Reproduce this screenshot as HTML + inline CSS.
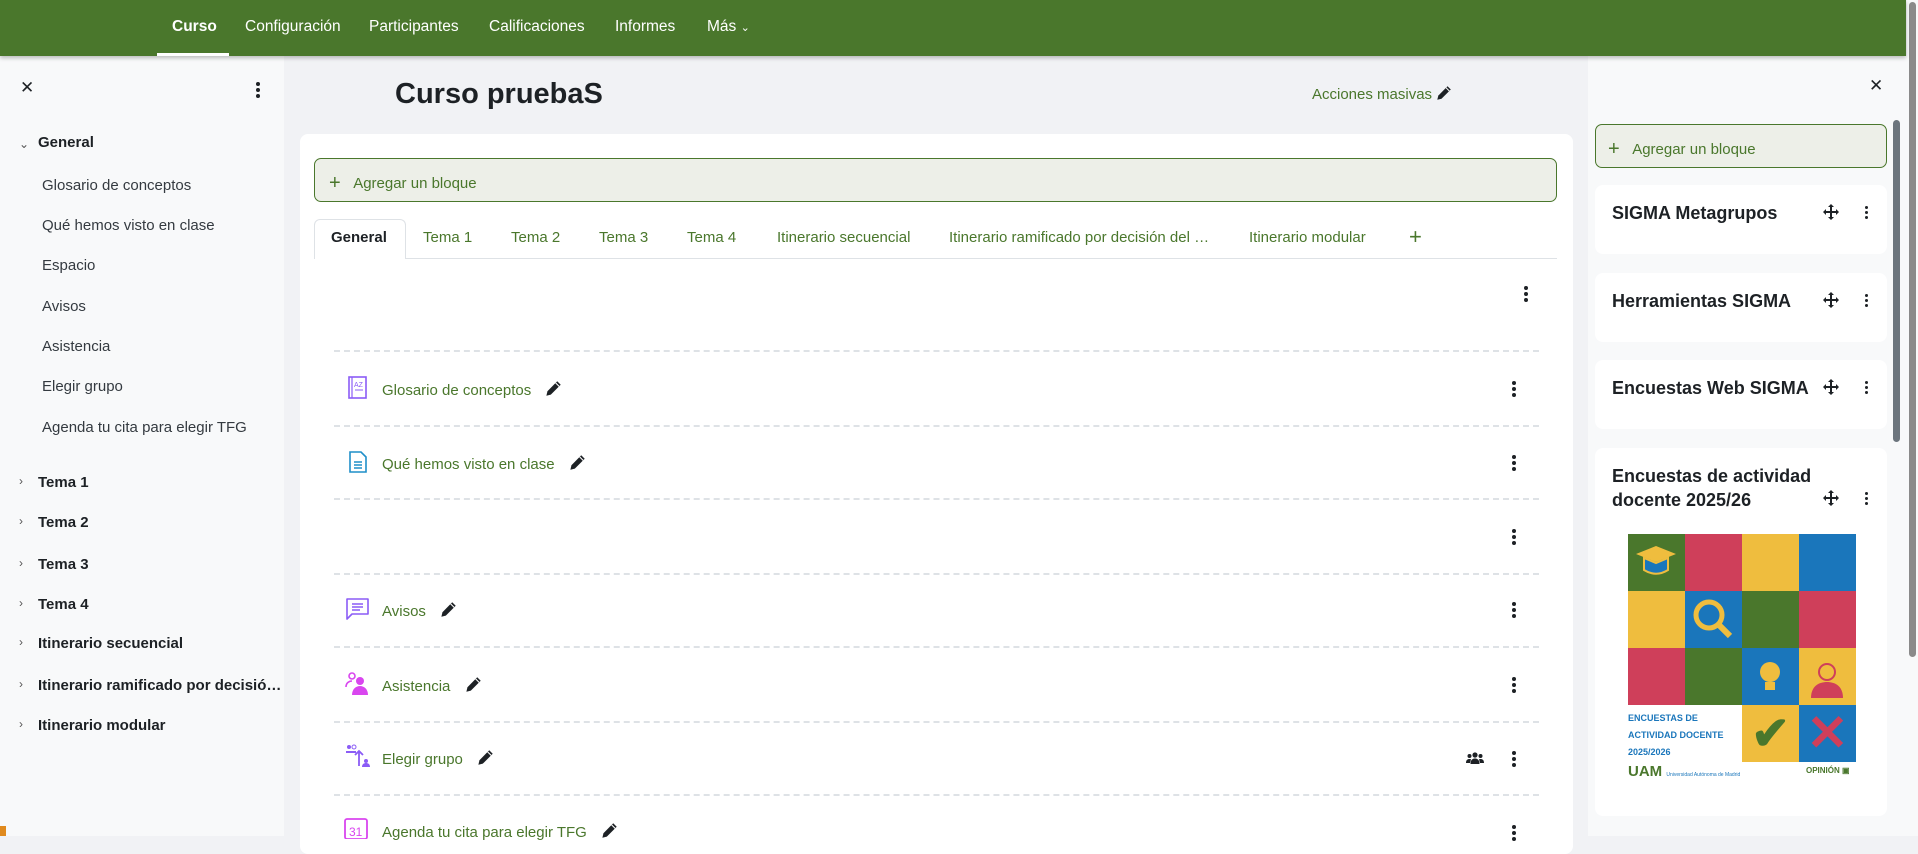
<!DOCTYPE html>
<html><head><meta charset="utf-8"><style>
*{box-sizing:border-box;margin:0;padding:0}
body{width:1918px;height:836px;overflow:hidden;background:#f1f2f5;font-family:"Liberation Sans",sans-serif;position:relative;color:#1d2125}
.abs{position:absolute}
.nav{left:0;top:0;width:1906px;height:56px;background:#4a772c;box-shadow:0 2px 4px rgba(0,0,0,.25);z-index:5}
.nav span{position:absolute;top:18px;color:#fff;font-size:15.5px}
.left{left:0;top:56px;width:284px;height:780px;background:#f8f9fa}
.left .it{position:absolute;left:42px;font-size:15px;color:#343a40}
.left .sec{position:absolute;left:38px;font-size:15px;font-weight:bold;color:#1d2125}
.left .car{position:absolute;left:19px;font-size:12px;color:#555}
.right{left:1588px;top:56px;width:319px;height:780px;background:#f8f9fa}
.card{left:300px;top:134px;width:1273px;height:720px;background:#fff;border-radius:8px}
.addb{background:#edefe8;border:1px solid #4a772c;border-radius:7px;color:#4a772c;font-size:15px}
.tab{position:absolute;top:229px;font-size:15px;color:#4a772c}
.dash{position:absolute;left:334px;width:1205px;border-top:2px dashed #dee2e6}
.act{position:absolute;left:382px;font-size:15px;color:#4a772c}
.act svg{vertical-align:-2px;margin-left:10px}
.dots{position:absolute;width:4px}
.dots i{display:block;width:4px;height:4px;border-radius:2px;background:#1d2125;margin-bottom:2px}
.blk{position:absolute;left:1595px;width:292px;background:#fff;border-radius:8px}
.blk b{position:absolute;left:17px;top:16px;font-size:18px;color:#1d2125;line-height:24px}
.blk .dots i{width:3px;height:3px;margin-bottom:2px}
.blk .mv{position:absolute;left:228px}
.g{position:absolute;width:57px;height:57px}
</style></head><body>
<svg width="0" height="0" style="position:absolute"><defs>
<symbol id="pen" viewBox="0 0 16 16"><path d="M11.5 1.2l3.3 3.3-9.3 9.3-4.2 1 1-4.2z" fill="#1d2125"/><path d="M10 2.7l3.3 3.3" stroke="#fff" stroke-width="1"/></symbol>
<symbol id="mv" viewBox="0 0 16 16"><path d="M8 0l3 3H9v4h4V5l3 3-3 3V9H9v4h2l-3 3-3-3h2V9H3v2L0 8l3-3v2h4V3H5z" fill="#1d2125"/></symbol>
</defs></svg>
<div class="abs nav">
<span style="left:172px;font-weight:bold">Curso</span>
<div class="abs" style="left:157px;top:53px;width:72px;height:3px;background:#fff"></div>
<span style="left:245px">Configuración</span>
<span style="left:369px">Participantes</span>
<span style="left:489px">Calificaciones</span>
<span style="left:615px">Informes</span>
<span style="left:707px">Más <small style="font-size:11px">&#8964;</small></span>
</div>

<div class="abs left">
<div class="abs" style="left:20px;top:22px;font-size:17px">✕</div>
<div class="dots" style="left:256px;top:26px"><i></i><i></i><i></i></div>
<div class="car" style="top:81px">&#8964;</div>
<div class="sec" style="top:78px">General</div>
<div class="it" style="top:121px">Glosario de conceptos</div>
<div class="it" style="top:161px">Qué hemos visto en clase</div>
<div class="it" style="top:201px">Espacio</div>
<div class="it" style="top:242px">Avisos</div>
<div class="it" style="top:282px">Asistencia</div>
<div class="it" style="top:322px">Elegir grupo</div>
<div class="it" style="top:363px">Agenda tu cita para elegir TFG</div>
<div class="car" style="top:418px">›</div><div class="sec" style="top:418px">Tema 1</div>
<div class="car" style="top:458px">›</div><div class="sec" style="top:458px">Tema 2</div>
<div class="car" style="top:500px">›</div><div class="sec" style="top:500px">Tema 3</div>
<div class="car" style="top:540px">›</div><div class="sec" style="top:540px">Tema 4</div>
<div class="car" style="top:579px">›</div><div class="sec" style="top:579px">Itinerario secuencial</div>
<div class="car" style="top:621px">›</div><div class="sec" style="top:621px">Itinerario ramificado por decisió…</div>
<div class="car" style="top:661px">›</div><div class="sec" style="top:661px">Itinerario modular</div>
</div>
<div class="abs" style="left:0;top:826px;width:6px;height:10px;background:#e08a1e"></div>

<div class="abs" style="left:395px;top:78px;font-size:29px;font-weight:bold">Curso pruebaS</div>
<div class="abs" style="left:1312px;top:85px;font-size:15px;color:#4a772c">Acciones masivas <svg width="16" height="16" style="vertical-align:-2px"><use href="#pen" style="fill:#4a772c"/></svg></div>

<div class="abs card"></div>
<div class="abs addb" style="left:314px;top:158px;width:1243px;height:44px;padding:12px 0 0 14px"><span style="font-size:20px;position:relative;top:1px">+</span>&nbsp;&nbsp;&nbsp;Agregar un bloque</div>
<div class="abs" style="left:314px;top:258px;width:1243px;border-top:1px solid #dee2e6"></div>
<div class="abs" style="left:314px;top:219px;width:92px;height:40px;background:#fff;border:1px solid #dee2e6;border-bottom:none;border-radius:6px 6px 0 0"></div>
<div class="tab" style="left:331px;color:#1d2125;font-weight:bold">General</div>
<div class="tab" style="left:423px">Tema 1</div>
<div class="tab" style="left:511px">Tema 2</div>
<div class="tab" style="left:599px">Tema 3</div>
<div class="tab" style="left:687px">Tema 4</div>
<div class="tab" style="left:777px">Itinerario secuencial</div>
<div class="tab" style="left:949px">Itinerario ramificado por decisión del …</div>
<div class="tab" style="left:1249px">Itinerario modular</div>
<div class="tab" style="left:1409px;font-size:22px;top:224px">+</div>

<div class="dots" style="left:1524px;top:286px"><i></i><i></i><i></i></div>
<div class="dash" style="top:350px"></div>
<div class="dash" style="top:425px"></div>
<div class="dash" style="top:498px"></div>
<div class="dash" style="top:573px"></div>
<div class="dash" style="top:646px"></div>
<div class="dash" style="top:721px"></div>
<div class="dash" style="top:794px"></div>

<svg class="abs" style="left:347px;top:376px" width="22" height="24" viewBox="0 0 22 24"><rect x="2" y="1" width="17" height="21" fill="none" stroke="#8b5cf6" stroke-width="1.6"/><line x1="5" y1="1" x2="5" y2="22" stroke="#8b5cf6" stroke-width="1.2"/><text x="7" y="11" font-size="7" fill="#8b5cf6" font-family="Liberation Sans">AZ</text><line x1="8" y1="14" x2="16" y2="14" stroke="#8b5cf6"/></svg>
<div class="act" style="top:380px">Glosario de conceptos <svg width="17" height="17"><use href="#pen"/></svg></div>
<div class="dots" style="left:1512px;top:381px"><i></i><i></i><i></i></div>

<svg class="abs" style="left:348px;top:450px" width="20" height="24" viewBox="0 0 20 24"><path d="M2 2h11l5 5v15H2z" fill="none" stroke="#1f8fc9" stroke-width="1.6"/><path d="M6 12h8M6 15h8M6 18h8" stroke="#1f8fc9" stroke-width="1.4"/></svg>
<div class="act" style="top:454px">Qué hemos visto en clase <svg width="17" height="17"><use href="#pen"/></svg></div>
<div class="dots" style="left:1512px;top:455px"><i></i><i></i><i></i></div>

<div class="dots" style="left:1512px;top:529px"><i></i><i></i><i></i></div>

<svg class="abs" style="left:345px;top:597px" width="26" height="26" viewBox="0 0 26 26"><path d="M2 2h21v15H7l-5 5z" fill="none" stroke="#8b5cf6" stroke-width="1.6" stroke-linejoin="round"/><path d="M7 7h11M7 10h11M7 13h8" stroke="#8b5cf6" stroke-width="1.4"/></svg>
<div class="act" style="top:601px">Avisos <svg width="17" height="17"><use href="#pen"/></svg></div>
<div class="dots" style="left:1512px;top:602px"><i></i><i></i><i></i></div>

<svg class="abs" style="left:344px;top:671px" width="28" height="26" viewBox="0 0 28 26"><circle cx="8" cy="5" r="3" fill="none" stroke="#d946ef" stroke-width="1.6"/><circle cx="16" cy="10" r="4" fill="#d946ef"/><path d="M8 24c0-6 4-9 8-9s8 3 8 9z" fill="#d946ef"/><path d="M2 16c0-4 3-6 6-6" fill="none" stroke="#d946ef" stroke-width="1.6"/></svg>
<div class="act" style="top:676px">Asistencia <svg width="17" height="17"><use href="#pen"/></svg></div>
<div class="dots" style="left:1512px;top:677px"><i></i><i></i><i></i></div>

<svg class="abs" style="left:345px;top:744px" width="26" height="26" viewBox="0 0 26 26"><circle cx="4" cy="3" r="2" fill="#8b5cf6"/><circle cx="9" cy="3" r="2" fill="none" stroke="#8b5cf6"/><path d="M1 8h10" stroke="#8b5cf6" stroke-width="2"/><path d="M14 22V7M10 11l4-4 4 4" fill="none" stroke="#8b5cf6" stroke-width="1.8"/><circle cx="21" cy="17" r="2" fill="#8b5cf6"/><path d="M17 23c0-3 2-4 4-4s4 1 4 4z" fill="#8b5cf6"/></svg>
<div class="act" style="top:749px">Elegir grupo <svg width="17" height="17"><use href="#pen"/></svg></div>
<svg class="abs" style="left:1466px;top:751px" width="18" height="14" viewBox="0 0 18 14"><circle cx="9" cy="4" r="2.6" fill="#1d2125"/><circle cx="3.5" cy="5" r="2" fill="#1d2125"/><circle cx="14.5" cy="5" r="2" fill="#1d2125"/><path d="M4.5 13c0-4 2-5.5 4.5-5.5s4.5 1.5 4.5 5.5zM0 12c0-3 1.5-4 3.5-4 1 0 1.5.3 1.5.3L4 12zM18 12c0-3-1.5-4-3.5-4-1 0-1.5.3-1.5.3L14 12z" fill="#1d2125"/></svg>
<div class="dots" style="left:1512px;top:751px"><i></i><i></i><i></i></div>

<svg class="abs" style="left:343px;top:817px" width="28" height="22" viewBox="0 0 28 22"><rect x="2" y="2" width="22" height="20" rx="2" fill="none" stroke="#d946ef" stroke-width="1.8"/><text x="6" y="19" font-size="12" fill="#d946ef" font-family="Liberation Sans">31</text></svg>
<div class="act" style="top:822px">Agenda tu cita para elegir TFG <svg width="17" height="17"><use href="#pen"/></svg></div>
<div class="dots" style="left:1512px;top:825px"><i></i><i></i><i></i></div>

<div class="abs right"></div>
<div class="abs" style="left:1869px;top:76px;font-size:17px">✕</div>
<div class="abs addb" style="left:1595px;top:124px;width:292px;height:44px;padding:12px 0 0 12px"><span style="font-size:20px;position:relative;top:1px">+</span>&nbsp;&nbsp;&nbsp;Agregar un bloque</div>
<div class="blk" style="top:185px;height:69px"><b>SIGMA Metagrupos</b><svg class="mv" style="top:19px" width="16" height="16"><use href="#mv"/></svg><div class="dots" style="left:270px;top:21px"><i></i><i></i><i></i></div></div>
<div class="blk" style="top:273px;height:69px"><b>Herramientas SIGMA</b><svg class="mv" style="top:19px" width="16" height="16"><use href="#mv"/></svg><div class="dots" style="left:270px;top:21px"><i></i><i></i><i></i></div></div>
<div class="blk" style="top:360px;height:69px"><b>Encuestas Web SIGMA</b><svg class="mv" style="top:19px" width="16" height="16"><use href="#mv"/></svg><div class="dots" style="left:270px;top:21px"><i></i><i></i><i></i></div></div>
<div class="blk" style="top:448px;height:368px"><b>Encuestas de actividad<br>docente 2025/26</b><svg class="mv" style="top:42px" width="16" height="16"><use href="#mv"/></svg><div class="dots" style="left:270px;top:44px"><i></i><i></i><i></i></div></div>

<div class="abs" style="left:1628px;top:534px;width:228px;height:250px">
<div class="g" style="left:0;top:0;background:#4a772c"></div><div class="g" style="left:57px;top:0;background:#cf3f5a"></div><div class="g" style="left:114px;top:0;background:#efbd3e"></div><div class="g" style="left:171px;top:0;background:#1a76bb"></div>
<div class="g" style="left:0;top:57px;background:#efbd3e"></div><div class="g" style="left:57px;top:57px;background:#1a76bb"></div><div class="g" style="left:114px;top:57px;background:#4a772c"></div><div class="g" style="left:171px;top:57px;background:#cf3f5a"></div>
<div class="g" style="left:0;top:114px;background:#cf3f5a"></div><div class="g" style="left:57px;top:114px;background:#4a772c"></div><div class="g" style="left:114px;top:114px;background:#1a76bb"></div><div class="g" style="left:171px;top:114px;background:#efbd3e"></div>
<svg class="abs" style="left:6px;top:6px" width="45" height="45" viewBox="0 0 45 45"><path d="M2 14l20-8 20 8-20 8z" fill="#efbd3e"/><path d="M10 18v12c8 5 16 5 24 0V18l-12 5z" fill="#1a76bb" stroke="#efbd3e" stroke-width="2"/></svg>
<svg class="abs" style="left:63px;top:63px" width="45" height="45" viewBox="0 0 45 45"><circle cx="18" cy="18" r="13" fill="none" stroke="#efbd3e" stroke-width="5"/><path d="M27 27l12 12" stroke="#efbd3e" stroke-width="6"/></svg>
<svg class="abs" style="left:120px;top:120px" width="45" height="45" viewBox="0 0 45 45"><circle cx="22" cy="18" r="10" fill="#efbd3e"/><rect x="17" y="28" width="10" height="8" fill="#efbd3e"/></svg>
<svg class="abs" style="left:177px;top:120px" width="45" height="45" viewBox="0 0 45 45"><circle cx="22" cy="18" r="8" fill="#efbd3e" stroke="#cf3f5a" stroke-width="2"/><path d="M6 44c0-12 8-16 16-16s16 4 16 16z" fill="#cf3f5a"/></svg>
<div class="g" style="left:114px;top:171px;background:#efbd3e;color:#4a772c;font-size:46px;text-align:center;line-height:57px;font-weight:bold">✔</div><div class="g" style="left:171px;top:171px;background:#1a76bb;color:#cf3f5a;font-size:50px;text-align:center;line-height:57px;font-weight:bold">✕</div>
<div class="abs" style="left:0;top:176px;font-size:9px;font-weight:bold;color:#1a76bb;line-height:17px">ENCUESTAS DE<br>ACTIVIDAD DOCENTE<br>2025/2026</div>
<div class="abs" style="left:0;top:229px;font-size:15px;font-weight:bold;color:#4a772c">UAM <span style="font-size:5px;color:#1a76bb;font-weight:normal">Universidad Autónoma de Madrid</span></div>
<div class="abs" style="left:178px;top:232px;font-size:8px;font-weight:bold;color:#4a772c">OPINIÓN ▣</div>
</div>

<div class="abs" style="left:1893px;top:120px;width:7px;height:322px;background:#6c757d;border-radius:4px"></div>
<div class="abs" style="left:1907px;top:0;width:11px;height:836px;background:#f8f9fa"></div>
<div class="abs" style="left:1909px;top:2px;width:7px;height:655px;background:#8a8a8a;border-radius:4px"></div>
</body></html>
